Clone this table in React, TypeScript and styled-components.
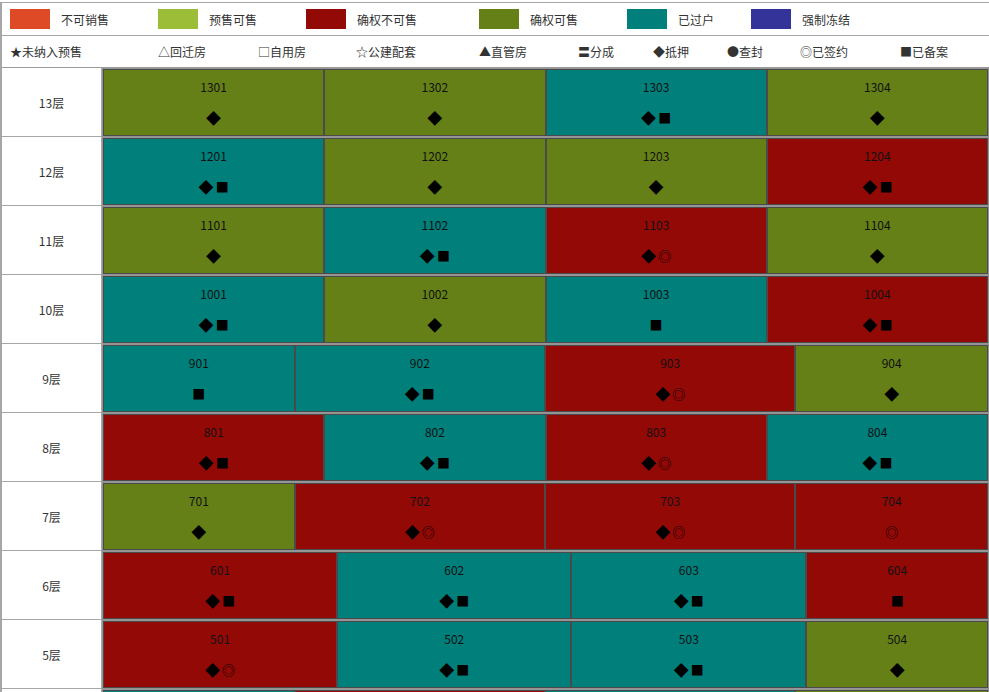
import React from "react";
import styled, { createGlobalStyle } from "styled-components";

const Global = createGlobalStyle`
  html, body { margin: 0; padding: 0; background: #fff; overflow: hidden; }
  body { font-family: "Noto Sans CJK SC", "Noto Sans", sans-serif; color: #333; }
`;

const Frame = styled.div`
  margin-top: 2px;
  border-top: 1px solid #a6a6a6;
  border-left: 2px solid #a6a6a6;
  width: 987px;
`;

const LegendRow = styled.div<{ $h: number; $line?: boolean }>`
  display: flex;
  align-items: center;
  height: ${(p) => p.$h}px;
  padding-left: 8px;
  border-bottom: ${(p) => (p.$line ? "1px solid #a6a6a6" : "none")};
  font-size: 12px;
  color: #333;
`;

const LegendItem = styled.div<{ $w?: number }>`
  display: flex;
  align-items: center;
  flex: ${(p) => (p.$w ? `0 0 ${p.$w}px` : "1 1 auto")};
  white-space: nowrap;
`;

const Swatch = styled.span<{ $c: string }>`
  display: inline-block;
  width: 40px;
  height: 20px;
  background: ${(p) => p.$c};
  margin-right: 11px;
`;

const Floors = styled.div`
  border-top: 1px solid #9a9a9a;
`;

const FloorRow = styled.div`
  display: flex;
  height: 69px;
`;

const FloorLabel = styled.div`
  flex: 0 0 100px;
  border-right: 1px solid #a6a6a6;
  border-bottom: 1px solid #a6a6a6;
  box-sizing: border-box;
  display: flex;
  align-items: center;
  justify-content: center;
  font-size: 12px;
  color: #333;
  background: #fff;
`;

const CellsWrap = styled.div`
  flex: 1 1 auto;
  display: flex;
  padding: 1px;
  background: #959595;
`;

const Unit = styled.div<{ $c: string; $grow: number }>`
  flex: ${(p) => p.$grow} 1 0;
  min-width: 0;
  box-sizing: border-box;
  border: 1px solid #4a4a4a;
  background: ${(p) => p.$c};
  display: flex;
  flex-direction: column;
  align-items: center;
  padding-top: 9px;
`;

const UnitNo = styled.div`
  font-size: 12px;
  line-height: 16px;
  color: #111;
`;

const UnitMarks = styled.div`
  margin-top: 15px;
  height: 16px;
  display: flex;
  align-items: center;
  gap: 2px;
  color: #000;
`;

const Mark = styled.span<{ $size: number }>`
  font-size: ${(p) => p.$size}px;
  line-height: 16px;
`;

const markSize: Record<string, number> = { "◆": 15, "■": 13, "◎": 13 };

const C = {
  orange: "#df4a26",
  lime: "#9bbd38",
  red: "#930906",
  olive: "#648017",
  teal: "#017f7b",
  navy: "#333399",
};

const legend1 = [
  { c: C.orange, t: "不可销售", w: 148 },
  { c: C.lime, t: "预售可售", w: 148 },
  { c: C.red, t: "确权不可售", w: 173 },
  { c: C.olive, t: "确权可售", w: 148 },
  { c: C.teal, t: "已过户", w: 124 },
  { c: C.navy, t: "强制冻结" },
];

const legend2 = [
  { t: "★未纳入预售", w: 148 },
  { t: "△回迁房", w: 100 },
  { t: "□自用房", w: 98 },
  { t: "☆公建配套", w: 123 },
  { t: "▲直管房", w: 99 },
  { t: "〓分成", w: 75 },
  { t: "◆抵押", w: 74 },
  { t: "●查封", w: 73 },
  { t: "◎已签约", w: 100 },
  { t: "■已备案" },
];

type U = [string, string, string];
const EQ = [1, 1, 1, 1];
const W9 = [191, 250, 250, 192];
const W6 = [234, 234, 235, 181];

const floors: { f: string; w: number[]; u: U[] }[] = [
  { f: "13层", w: EQ, u: [["1301", C.olive, "◆"], ["1302", C.olive, "◆"], ["1303", C.teal, "◆■"], ["1304", C.olive, "◆"]] },
  { f: "12层", w: EQ, u: [["1201", C.teal, "◆■"], ["1202", C.olive, "◆"], ["1203", C.olive, "◆"], ["1204", C.red, "◆■"]] },
  { f: "11层", w: EQ, u: [["1101", C.olive, "◆"], ["1102", C.teal, "◆■"], ["1103", C.red, "◆◎"], ["1104", C.olive, "◆"]] },
  { f: "10层", w: EQ, u: [["1001", C.teal, "◆■"], ["1002", C.olive, "◆"], ["1003", C.teal, "■"], ["1004", C.red, "◆■"]] },
  { f: "9层", w: W9, u: [["901", C.teal, "■"], ["902", C.teal, "◆■"], ["903", C.red, "◆◎"], ["904", C.olive, "◆"]] },
  { f: "8层", w: EQ, u: [["801", C.red, "◆■"], ["802", C.teal, "◆■"], ["803", C.red, "◆◎"], ["804", C.teal, "◆■"]] },
  { f: "7层", w: W9, u: [["701", C.olive, "◆"], ["702", C.red, "◆◎"], ["703", C.red, "◆◎"], ["704", C.red, "◎"]] },
  { f: "6层", w: W6, u: [["601", C.red, "◆■"], ["602", C.teal, "◆■"], ["603", C.teal, "◆■"], ["604", C.red, "■"]] },
  { f: "5层", w: W6, u: [["501", C.red, "◆◎"], ["502", C.teal, "◆■"], ["503", C.teal, "◆■"], ["504", C.olive, "◆"]] },
  { f: "4层", w: W9, u: [["401", C.teal, "◆■"], ["402", C.red, "◆◎"], ["403", C.teal, "◆■"], ["404", C.olive, "◆"]] },
];

export default function App() {
  return (
    <>
      <Global />
      <Frame>
        <LegendRow $h={32} $line>
          {legend1.map((l) => (
            <LegendItem key={l.t} $w={l.w}>
              <Swatch $c={l.c} />
              {l.t}
            </LegendItem>
          ))}
        </LegendRow>
        <LegendRow $h={31}>
          {legend2.map((l) => (
            <LegendItem key={l.t} $w={l.w}>
              {l.t}
            </LegendItem>
          ))}
        </LegendRow>
        <Floors>
          {floors.map((fl) => (
            <FloorRow key={fl.f}>
              <FloorLabel>{fl.f}</FloorLabel>
              <CellsWrap>
                {fl.u.map(([no, c, m], i) => (
                  <Unit key={no} $c={c} $grow={fl.w[i]}>
                    <UnitNo>{no}</UnitNo>
                    <UnitMarks>
                      {Array.from(m).map((g, k) => (
                        <Mark key={k} $size={markSize[g] ?? 13}>
                          {g}
                        </Mark>
                      ))}
                    </UnitMarks>
                  </Unit>
                ))}
              </CellsWrap>
            </FloorRow>
          ))}
        </Floors>
      </Frame>
    </>
  );
}
